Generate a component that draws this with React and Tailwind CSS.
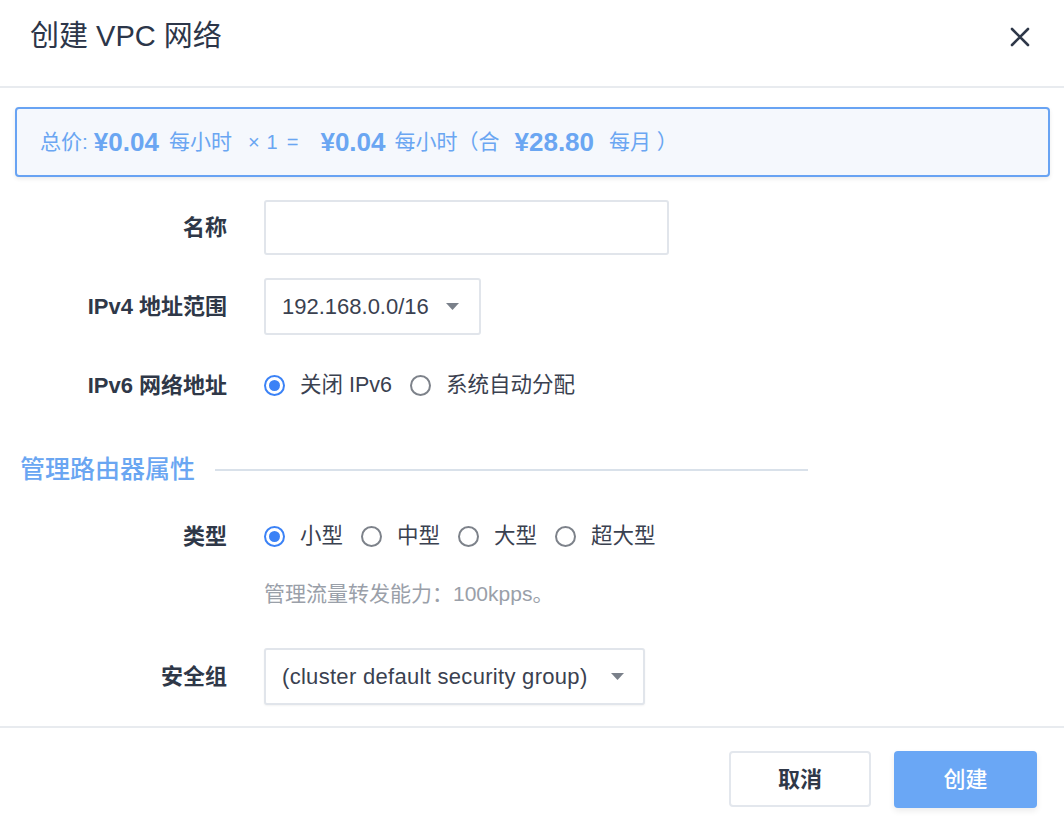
import React from "react";

function Radio({ checked, label }) {
  return (
    <div className="flex items-center">
      {checked ? (
        <span className="flex h-[21px] w-[21px] items-center justify-center rounded-full border-2 border-[#3b82f6] bg-white">
          <span className="h-[11px] w-[11px] rounded-full bg-[#3b82f6]" />
        </span>
      ) : (
        <span className="h-[21px] w-[21px] rounded-full border-2 border-[#7d828a] bg-white" />
      )}
      <span className="ml-[15px] mr-[18px] text-[21.5px] text-[#3a4150]">{label}</span>
    </div>
  );
}

function Caret() {
  return (
    <svg width="13" height="7" viewBox="0 0 13 7">
      <path d="M0 0 L13 0 L6.5 7 Z" fill="#7a808a" />
    </svg>
  );
}

function Row({ label, children, className = "" }) {
  return (
    <div className={"flex items-center " + className}>
      <div className="w-[227px] shrink-0 text-right text-[22px] font-semibold text-[#2f3848]">{label}</div>
      <div className="ml-[37px] flex items-center">{children}</div>
    </div>
  );
}

export default function App() {
  return (
    <div className="h-[820px] w-[1064px] overflow-hidden bg-white font-['Liberation_Sans','Noto_Sans_CJK_SC',sans-serif]">
      {/* Header */}
      <div className="flex h-[88px] items-center justify-between border-b-2 border-[#e8ebef] pl-[30px] pr-[33px] pb-[12px]">
        <div className="text-[29px] text-[#2c3649]">创建 VPC 网络</div>
        <svg width="22" height="22" viewBox="0 0 22 22">
          <path d="M3 3 L19 19 M19 3 L3 19" stroke="#2f3849" strokeWidth="2.6" strokeLinecap="round" />
        </svg>
      </div>

      {/* Price box */}
      <div className="mx-[14px] ml-[15px] mt-[19px] flex h-[70px] items-center rounded-[4px] border-2 border-[#68a3f3] bg-[#f5f8fd] pl-[23px] text-[#6aa6f2] shadow-[0_2px_4px_rgba(0,0,0,0.08)]">
        <span className="text-[21px]">总价:</span>
        <span className="ml-[6px] text-[26px] font-semibold">¥0.04</span>
        <span className="ml-[10px] text-[21px]">每小时</span>
        <span className="ml-[16px] text-[20px]">×</span>
        <span className="ml-[7px] text-[20px]">1</span>
        <span className="ml-[9px] text-[20px]">=</span>
        <span className="ml-[22px] text-[26px] font-semibold">¥0.04</span>
        <span className="ml-[9px] text-[21px]">每小时（合</span>
        <span className="ml-[15px] text-[26px] font-semibold">¥28.80</span>
        <span className="ml-[15px] text-[21px]">每月 ）</span>
      </div>

      {/* Form */}
      <Row label="名称" className="mt-[23px] h-[55px]">
        <div className="h-[55px] w-[405px] rounded-[3px] border-2 border-[#e1e5eb] bg-white" />
      </Row>

      <Row label="IPv4 地址范围" className="mt-[23px] h-[57px]">
        <div className="flex h-[57px] w-[217px] items-center justify-between rounded-[3px] border-2 border-[#e1e5eb] bg-white pl-[16px] pr-[20px]">
          <span className="text-[22px] text-[#3a4150]">192.168.0.0/16</span>
          <Caret />
        </div>
      </Row>

      <Row label="IPv6 网络地址" className="mt-[23px] h-[55px]">
        <Radio checked label="关闭 IPv6" />
        <Radio label="系统自动分配" />
      </Row>

      {/* Section */}
      <div className="mt-[42px] flex h-[30px] items-center pl-[20px]">
        <span className="text-[25px] font-medium text-[#6aa6f2]">管理路由器属性</span>
        <div className="ml-[20px] h-[2px] w-[593px] bg-[#d9e1ea]" />
      </div>

      <Row label="类型" className="mt-[24px] h-[55px]">
        <Radio checked label="小型" />
        <Radio label="中型" />
        <Radio label="大型" />
        <Radio label="超大型" />
      </Row>

      <div className="mt-[15px] h-[30px] pl-[264px] text-[21px] leading-[30px] text-[#9aa0a9]">
        管理流量转发能力：100kpps。
      </div>

      <Row label="安全组" className="mt-[39px] h-[57px]">
        <div className="flex h-[57px] w-[381px] items-center justify-between rounded-[3px] border-2 border-[#e1e5eb] bg-white pl-[16px] pr-[19px] shadow-[0_1px_2px_rgba(0,0,0,0.05)]">
          <span className="text-[22px] tracking-[0.3px] text-[#3a4150]">(cluster default security group)</span>
          <Caret />
        </div>
      </Row>

      {/* Footer */}
      <div className="mt-[21px] flex justify-end gap-[23px] border-t-2 border-[#e8ebef] pr-[27px] pt-[23px]">
        <button className="h-[56px] w-[142px] rounded-[4px] border-2 border-[#e3e7ed] bg-white text-[22px] font-semibold text-[#2f3848]">
          取消
        </button>
        <button className="h-[57px] w-[143px] rounded-[4px] bg-[#6aa7f5] text-[22px] font-medium text-white shadow-[0_3px_6px_rgba(0,0,0,0.08)]">
          创建
        </button>
      </div>
    </div>
  );
}
